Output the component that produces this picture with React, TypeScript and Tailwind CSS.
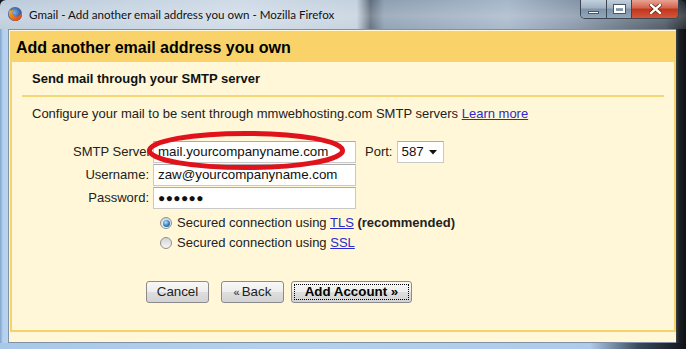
import React from "react";

function FirefoxIcon() {
  return (
    <svg width="16" height="16" viewBox="0 0 16 16">
      <defs>
        <radialGradient id="ffg" cx="0.45" cy="0.4" r="0.6">
          <stop offset="0" stopColor="#7cb0e8" />
          <stop offset="1" stopColor="#1d3f86" />
        </radialGradient>
        <linearGradient id="ffo" x1="0" y1="0" x2="1" y2="1">
          <stop offset="0" stopColor="#f7b624" />
          <stop offset="0.6" stopColor="#e8661a" />
          <stop offset="1" stopColor="#c8391a" />
        </linearGradient>
      </defs>
      <circle cx="8" cy="8" r="7" fill="url(#ffg)" />
      <path
        d="M3.2 3.4 C2 5 1.4 7.5 2 9.8 C2.8 12.8 5.4 15 8.4 15 C12 15 15 12 15 8.4 C15 7.3 14.7 6.2 14.2 5.3 C14.3 6.6 13.9 8 13 9 C12 10.3 10.2 11 8.5 10.6 C6.6 10.2 5.2 8.6 5.3 6.7 C5.3 5.6 5.9 4.6 6.8 4.1 C5.7 3.9 4.6 4.3 3.9 5 C3.7 4.5 3.5 3.9 3.2 3.4Z"
        fill="url(#ffo)"
      />
    </svg>
  );
}

function Radio({ checked }: { checked?: boolean }) {
  return (
    <span className="w-[12px] h-[12px] rounded-full border border-[#8e9090] bg-[linear-gradient(180deg,#d4d4d4,#f7f7f7)] flex items-center justify-center shrink-0">
      {checked && (
        <span className="w-[7px] h-[7px] rounded-full bg-[radial-gradient(circle_at_40%_35%,#b5e4fb,#2b7fc0_55%,#0f4c86)]" />
      )}
    </span>
  );
}

const btn =
  "h-[22px] rounded-[3px] border border-[#8b8b8b] bg-[linear-gradient(180deg,#f8f8f8_0%,#ededed_50%,#dedede_52%,#d3d3d3_100%)] text-[13.33px] text-[#222] flex items-center justify-center";

export default function App() {
  return (
    <div className="w-[686px] h-[349px] overflow-hidden bg-[#15191d] font-['Liberation_Sans',Arial,sans-serif] text-[#222]">
      {/* Title bar */}
      <div className="h-[29px] flex items-center bg-[linear-gradient(180deg,rgba(255,255,255,0)_0%,rgba(255,255,255,0.18)_55%,rgba(255,255,255,0.05)_100%),linear-gradient(90deg,#bccbdb_0%,#cfdbe7_35%,#c4d1de_52%,#5f6d7c_54%,#8d9fb2_56%,#a6b7c9_74%,#8595a8_84%,#4a5560_97%,#1f252b_100%)] rounded-t-[6px]">
        <div className="pl-[7px] flex items-center gap-[6px]">
          <FirefoxIcon />
          <span className="font-['Lato',sans-serif] text-[11.6px] text-[#111]">
            Gmail - Add another email address you own - Mozilla Firefox
          </span>
        </div>
        <div className="ml-auto mr-[7px] self-start flex h-[19px] border border-t-0 border-[#3d4753] rounded-b-[5px] overflow-hidden">
          <div className="w-[26px] h-full border-r border-[#3d4753] bg-[linear-gradient(180deg,#c3d0dd_0%,#9eb0c3_45%,#7f93a8_50%,#93a7bc_100%)] flex items-end justify-center pb-[4px]">
            <div className="w-[11px] h-[3px] bg-white border border-[#4a5563]" />
          </div>
          <div className="w-[25px] h-full border-r border-[#3d4753] bg-[linear-gradient(180deg,#c3d0dd_0%,#9eb0c3_45%,#7f93a8_50%,#93a7bc_100%)] flex items-center justify-center">
            <div className="w-[11px] h-[8px] border-2 border-t-[3px] border-white outline outline-1 outline-[#4a5563]" />
          </div>
          <div className="w-[46px] h-full bg-[linear-gradient(180deg,#e9a394_0%,#d4614a_45%,#c0351d_50%,#d2583b_100%)] flex items-center justify-center">
            <svg width="13" height="10" viewBox="0 0 13 10">
              <path d="M2 1 L11 9 M11 1 L2 9" stroke="#5a1a10" strokeWidth="3.8" strokeLinecap="square" />
              <path d="M2 1 L11 9 M11 1 L2 9" stroke="#fff" strokeWidth="2.4" strokeLinecap="square" />
            </svg>
          </div>
        </div>
      </div>

      {/* Body */}
      <div className="flex h-[314px]">
        <div className="w-[8px] bg-[linear-gradient(90deg,#7fa3cc_0%,#b4cfec_35%,#b8d3ef_100%)]" />
        <div className="w-[668px] border-l border-t border-b border-[#7f91a5] bg-[#fff7d8] pl-[1px] pt-[1px]">
          <div className="h-[301px] border-[2px] border-t-0 border-[#f5d26c] bg-[#fff7d8]">
            <div className="h-[31px] bg-[#f9d36a] flex items-center pl-[4px] pt-[2px] text-[16px] font-bold text-black">
              Add another email address you own
            </div>
            <div className="mx-[10px]">
              <div className="h-[35px] border-b-2 border-[#f5d776] flex items-center pl-[10px] text-[13px] font-bold text-[#111]">
                Send mail through your SMTP server
              </div>
              <div className="pl-[10px]">
                <p className="mt-[9px] leading-[16px] text-[13px] text-[#222]">
                  Configure your mail to be sent through mmwebhosting.com SMTP servers{" "}
                  <span className="text-[#2b2bcb] underline">Learn more</span>
                </p>

                <div className="mt-[19px] flex flex-col gap-[1px] text-[13px]">
                  <div className="relative flex items-center h-[22px]">
                    <div className="w-[117px] pl-[41px] whitespace-nowrap overflow-hidden">SMTP Server:</div>
                    <div className="ml-[4px] w-[203px] h-[22px] bg-white border border-[#c9c9c9] border-t-[#ababab] flex items-center pl-[4px] text-[13.33px] text-[#111]">
                      mail.yourcompanyname.com
                    </div>
                    <div className="ml-[9px]">Port:</div>
                    <div className="ml-[5px] w-[47px] h-[22px] bg-white border border-[#c9c9c9] border-t-[#ababab] flex items-center pl-[3px] text-[13.33px] text-[#111]">
                      <span>587</span>
                      <svg className="ml-auto mr-[6px]" width="8" height="5" viewBox="0 0 8 5">
                        <path d="M0 0 H8 L4 4.5Z" fill="#111" />
                      </svg>
                    </div>
                    <svg className="absolute left-[112px] top-[-12px]" width="204" height="43" viewBox="0 0 204 43">
                      <ellipse cx="102" cy="21.5" rx="96.6" ry="17.1" fill="none" stroke="#e0121b" strokeWidth="5" />
                    </svg>
                  </div>
                  <div className="flex items-center h-[22px]">
                    <div className="w-[117px] text-right">Username:</div>
                    <div className="ml-[4px] w-[203px] h-[22px] bg-white border border-[#c9c9c9] border-t-[#ababab] flex items-center pl-[4px] text-[13.33px] text-[#111]">
                      zaw@yourcompanyname.com
                    </div>
                  </div>
                  <div className="flex items-center h-[22px]">
                    <div className="w-[117px] text-right">Password:</div>
                    <div className="ml-[4px] w-[203px] h-[22px] bg-white border border-[#c9c9c9] border-t-[#ababab] flex items-center pl-[4px] text-[12px] tracking-[0.4px] text-[#111]">
                      ●●●●●●
                    </div>
                  </div>
                </div>

                <div className="mt-[4px] pl-[128px] text-[13px]">
                  <div className="h-[20px] flex items-center gap-[5px]">
                    <Radio checked />
                    <span>
                      Secured connection using <span className="text-[#2b2bcb] underline">TLS</span>{" "}
                      <span className="font-bold">(recommended)</span>
                    </span>
                  </div>
                  <div className="h-[20px] flex items-center gap-[5px]">
                    <Radio />
                    <span>
                      Secured connection using <span className="text-[#2b2bcb] underline">SSL</span>
                    </span>
                  </div>
                </div>

                <div className="mt-[28px] pl-[114px] flex items-center">
                  <button className={`${btn} w-[63px]`}>Cancel</button>
                  <button className={`${btn} w-[63px] ml-[12px]`}>
                    <span className="text-[11px] mr-[2px]">«</span>Back
                  </button>
                  <button className={`${btn} w-[121px] ml-[7px] p-[2px]`}>
                    <span className="w-full h-full border border-dotted border-black flex items-center justify-center font-bold text-black">
                      Add Account »
                    </span>
                  </button>
                </div>
              </div>
            </div>
          </div>
        </div>
        <div className="flex-1 bg-[linear-gradient(90deg,#3b4046_0%,#1b1f23_30%,#0e1114_100%)]" />
      </div>
      <div className="h-[6px] bg-[linear-gradient(90deg,#a9c7e8_0%,#b4d0ee_40%,#aecbeb_86%,#3a4a5c_93%,#0f1317_100%)]" />
    </div>
  );
}
